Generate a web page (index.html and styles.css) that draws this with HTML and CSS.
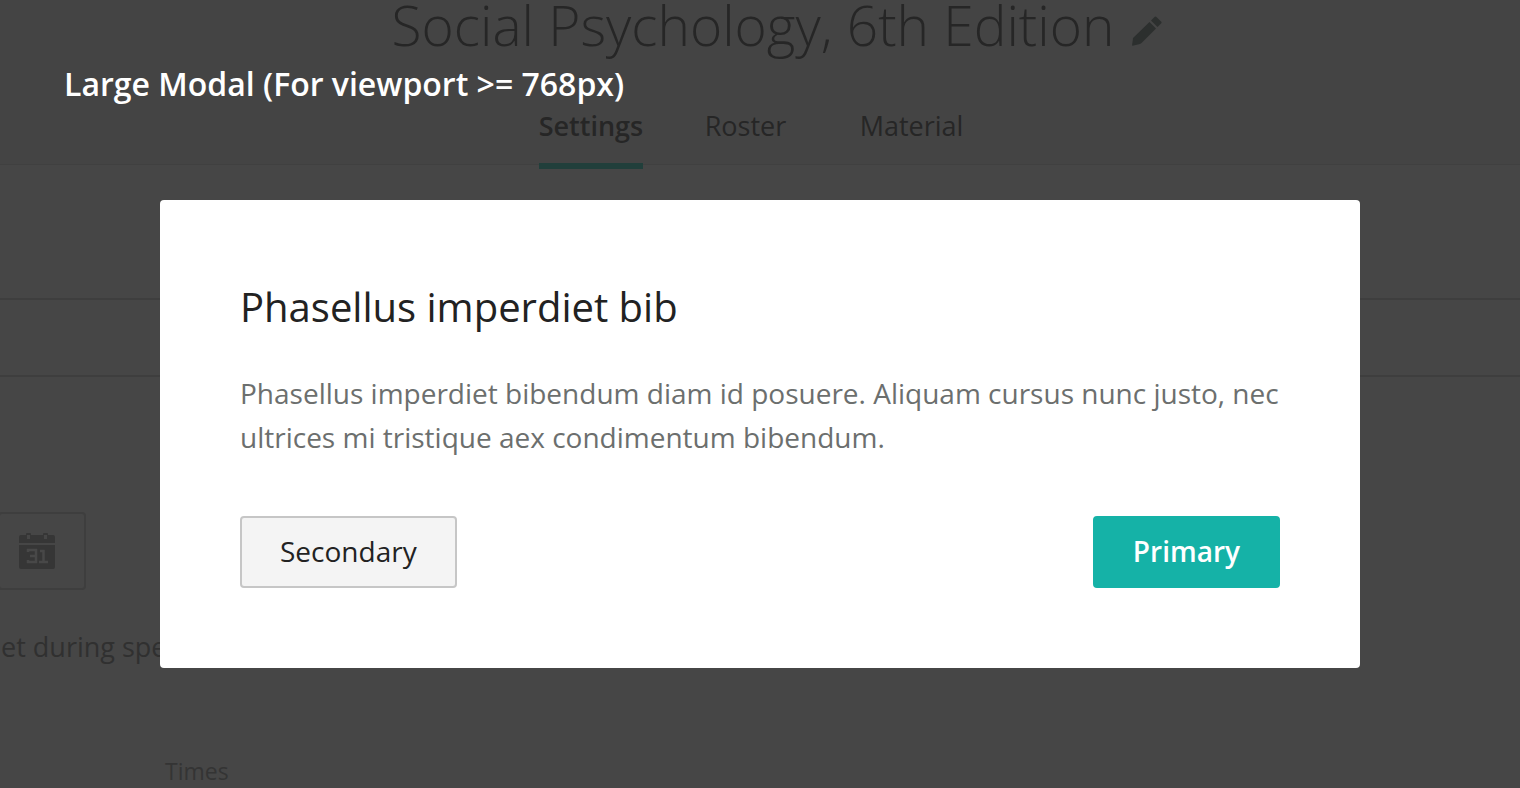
FILE: index.html
```html
<!DOCTYPE html>
<html lang="en">
<head>
<meta charset="utf-8">
<meta name="viewport" content="width=device-width, initial-scale=1">
<title>Large Modal</title>
<link rel="stylesheet" href="styles.css">
</head>
<body>
<div class="page">
  <header class="header">
    <div class="title-row">
      <h1 class="title">Social Psychology, 6th Edition</h1>
      <button class="edit" type="button" aria-label="Edit title">
        <svg width="30" height="30" viewBox="0 0 30 30" fill="currentColor" aria-hidden="true">
          <path d="M17.500 6L24 12.500 9.500 27Q8.500 28 7 28.300L.5 29.800Q0 29.800.100 29L1 22.500Q1.300 21.500 2.300 20.700zM19 4.500L22.500 1Q23.500.200 24.400 1L29.300 5.800Q30 6.600 29.300 7.300L25.500 11z"/>
        </svg>
      </button>
    </div>
    <nav class="tabs">
      <a class="tab tab-active" href="#settings">Settings</a>
      <a class="tab" href="#roster">Roster</a>
      <a class="tab" href="#material">Material</a>
    </nav>
  </header>
  <main class="content">
    <div class="band"></div>
    <button class="date" type="button" aria-label="Choose date">
      <svg width="36" height="36" viewBox="0 0 36 36" aria-hidden="true">
        <path fill="#363636" d="M2 2h5V1q0-1 1-1h3q1 0 1 1v1h12V1q0-1 1-1h3q1 0 1 1v1h5q2 0 2 2v6H0V4q0-2 2-2zM0 12h36v22q0 2-2 2H2q-2 0-2-2z"/>
        <path fill="#464646" d="M8 2h3v4H8zM25 2h3v4h-3z"/>
        <path fill="none" stroke="#484848" stroke-width="2.500" d="M9 19v-2h8v12H9v-2M11 23h6M21 18h3.500v11M20 29h9"/>
      </svg>
    </button>
    <p class="note">et during specified times</p>
    <p class="times">Times</p>
  </main>
</div>
<div class="overlay">
  <p class="caption">Large Modal (For viewport &gt;= 768px)</p>
  <section class="modal" role="dialog" aria-modal="true" aria-labelledby="modal-title">
    <h2 class="modal-title" id="modal-title">Phasellus imperdiet bib</h2>
    <p class="modal-text">Phasellus imperdiet bibendum diam id posuere. Aliquam cursus nunc justo, nec ultrices mi tristique aex condimentum bibendum.</p>
    <div class="actions">
      <button class="btn btn-secondary" type="button">Secondary</button>
      <button class="btn btn-primary" type="button">Primary</button>
    </div>
  </section>
</div>
</body>
</html>
```

FILE: styles.css
```css
* {
  box-sizing: border-box;
}

body {
  margin: 0;
  background: #464646;
  color: #262626;
  font-family: "Open Sans", "Noto Sans", sans-serif;
  font-size: 28px;
}

h1, h2, p {
  margin: 0;
}

button {
  font-family: inherit;
  font-size: inherit;
  cursor: pointer;
}

.page {
  height: 100vh;
  overflow: hidden;
}

.header {
  background: #444444;
  border-bottom: 1px solid #404040;
}

.title-row {
  display: flex;
  justify-content: center;
  align-items: flex-start;
  gap: 18px;
  padding-left: 34px;
  height: 60px;
}

.title {
  font-size: 55px;
  font-weight: 300;
  line-height: 50px;
  white-space: nowrap;
}

.edit {
  display: flex;
  margin-top: 16px;
  padding: 0;
  border: 0;
  background: none;
  color: #2c2f2e;
}

.tabs {
  display: grid;
  grid-template-columns: 166px 155px auto;
  justify-content: center;
  padding: 40px 18px 0 0;
  height: 104px;
}

.tab {
  justify-self: start;
  height: 69px;
  color: #262626;
  font-size: 27px;
  line-height: 52px;
  text-decoration: none;
}

.tab-active {
  border-bottom: 6px solid #213f3b;
  font-weight: 600;
}

.band {
  height: 79px;
  margin-top: 133px;
  border-top: 2px solid #3e3e3e;
  border-bottom: 2px solid #3e3e3e;
}

.date {
  display: flex;
  align-items: center;
  justify-content: flex-end;
  width: 88px;
  height: 78px;
  margin: 135px 0 0 -2px;
  padding: 0 29px 0 0;
  border: 2px solid #3e3e3e;
  border-radius: 4px;
  background: #464646;
}

.note {
  margin-top: 35px;
  padding-left: 1px;
  font-size: 27px;
  line-height: 44px;
  color: #303030;
}

.times {
  margin-top: 84px;
  padding-left: 165px;
  font-size: 23px;
  line-height: 36px;
  color: #343434;
}

.overlay {
  position: absolute;
  inset: 0;
  padding: 62px 64px 0;
}

.caption {
  color: #ffffff;
  font-size: 32px;
  font-weight: 600;
  line-height: 44px;
}

.modal {
  max-width: 1200px;
  margin: 94px auto 0;
  padding: 79px 80px 80px;
  border-radius: 4px;
  background: #ffffff;
}

.modal-title {
  color: #222222;
  font-size: 40px;
  font-weight: 400;
  line-height: 56px;
}

.modal-text {
  margin-top: 36px;
  color: #6c6f6e;
  line-height: 44px;
}

.actions {
  display: flex;
  justify-content: space-between;
  margin-top: 57px;
}

.btn {
  height: 72px;
  padding: 0 38px 2px;
  border: 2px solid #c6c6c6;
  border-radius: 4px;
}

.btn-secondary {
  background: #f4f4f4;
  color: #222222;
}

.btn-primary {
  border-color: #15b2a7;
  background: #15b2a7;
  color: #ffffff;
  font-weight: 600;
}
```
